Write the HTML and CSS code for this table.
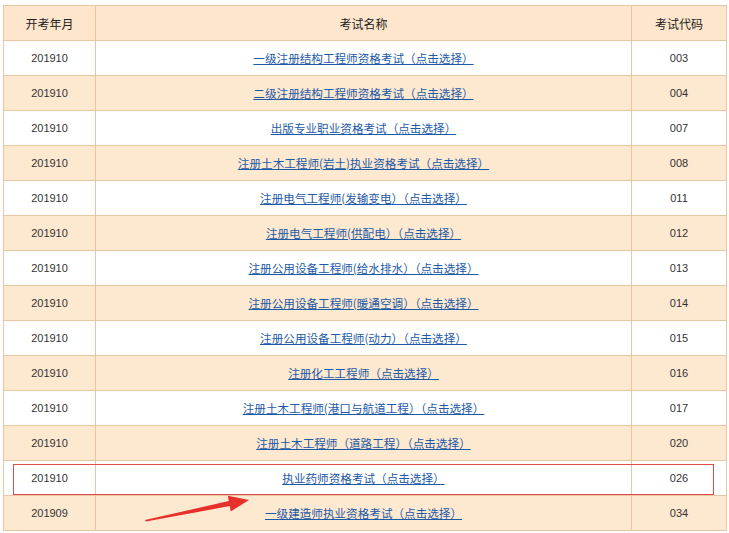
FILE: index.html
```html
<!DOCTYPE html>
<html lang="zh">
<head>
<meta charset="utf-8">
<link rel="stylesheet" href="styles.css">
</head>
<body>
<div class="wrap">
<table class="exam">
<colgroup><col class="c1"><col class="c2"><col class="c3"></colgroup>
<thead>
<tr><th>开考年月</th><th>考试名称</th><th>考试代码</th></tr>
</thead>
<tbody>
<tr><td class="num">201910</td><td><a href="#">一级注册结构工程师资格考试（点击选择）</a></td><td class="num">003</td></tr>
<tr class="alt"><td class="num">201910</td><td><a href="#">二级注册结构工程师资格考试（点击选择）</a></td><td class="num">004</td></tr>
<tr><td class="num">201910</td><td><a href="#">出版专业职业资格考试（点击选择）</a></td><td class="num">007</td></tr>
<tr class="alt"><td class="num">201910</td><td><a href="#">注册土木工程师(岩土)执业资格考试（点击选择）</a></td><td class="num">008</td></tr>
<tr><td class="num">201910</td><td><a href="#">注册电气工程师(发输变电）（点击选择）</a></td><td class="num">011</td></tr>
<tr class="alt"><td class="num">201910</td><td><a href="#">注册电气工程师(供配电）（点击选择）</a></td><td class="num">012</td></tr>
<tr><td class="num">201910</td><td><a href="#">注册公用设备工程师(给水排水）（点击选择）</a></td><td class="num">013</td></tr>
<tr class="alt"><td class="num">201910</td><td><a href="#">注册公用设备工程师(暖通空调）（点击选择）</a></td><td class="num">014</td></tr>
<tr><td class="num">201910</td><td><a href="#">注册公用设备工程师(动力）（点击选择）</a></td><td class="num">015</td></tr>
<tr class="alt"><td class="num">201910</td><td><a href="#">注册化工工程师（点击选择）</a></td><td class="num">016</td></tr>
<tr><td class="num">201910</td><td><a href="#">注册土木工程师(港口与航道工程）（点击选择）</a></td><td class="num">017</td></tr>
<tr class="alt"><td class="num">201910</td><td><a href="#">注册土木工程师（道路工程）（点击选择）</a></td><td class="num">020</td></tr>
<tr><td class="num">201910</td><td><a href="#">执业药师资格考试（点击选择）</a></td><td class="num">026</td></tr>
<tr class="alt"><td class="num">201909</td><td><a href="#">一级建造师执业资格考试（点击选择）</a></td><td class="num">034</td></tr>
</tbody>
</table>
<div class="mark"></div>
<svg class="arrow" width="110" height="34" viewBox="0 0 110 34">
  <polygon points="1,30 84.8,11.1 83.9,5.7 105,10 86.7,21.5 85.8,16.1 2,31.5" fill="#e8302a"/>
</svg>
</div>
</body>
</html>
```

FILE: styles.css
```css
html, body {
  margin: 0;
  padding: 0;
  background: #ffffff;
}
.wrap {
  position: relative;
  padding: 5px 0 0 3px;
  width: 729px;
  height: 533px;
  overflow: hidden;
  box-sizing: border-box;
}
.exam {
  border-collapse: collapse;
  width: 723px;
  table-layout: fixed;
  font-family: "Noto Sans CJK SC", "Liberation Sans", sans-serif;
  font-size: 12px;
  color: #222;
}
.c1 { width: 92px; }
.c2 { width: 536px; }
.c3 { width: 95px; }
.exam th, .exam td {
  border: 1px solid #e9c5a2;
  height: 34px;
  padding: 0;
  text-align: center;
  vertical-align: middle;
}
.exam th {
  background: #fde6cb;
  font-weight: normal;
  font-size: 12px;
  color: #222;
}
.exam tr.alt td {
  background: #fde8d0;
}
.exam td.num {
  font-family: "Liberation Sans", Arial, sans-serif;
  font-size: 11px;
  color: #333;
}
.exam a {
  color: #1d5aa6;
  text-decoration: underline;
  font-size: 11.6px;
  line-height: 14px;
  position: relative;
  top: -1px;
}
.mark {
  position: absolute;
  left: 13px;
  top: 464px;
  width: 699px;
  height: 29px;
  border: 1px solid #df4a4a;
}
.arrow {
  position: absolute;
  left: 144px;
  top: 490px;
}
```
